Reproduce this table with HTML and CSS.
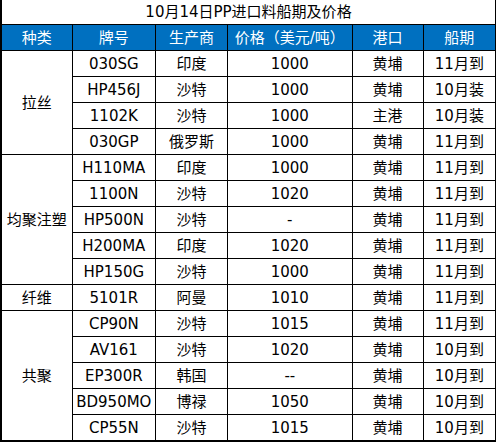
FILE: index.html
```html
<!DOCTYPE html>
<html lang="zh-CN">
<head>
    <meta charset="UTF-8">
    <title>10月14日PP进口料船期及价格</title>
    <link rel="stylesheet" href="styles.css">
</head>
<body>
    <table class="price-table">
        <colgroup>
            <col class="c-type">
            <col class="c-grade">
            <col class="c-maker">
            <col class="c-price">
            <col class="c-port">
            <col class="c-ship">
        </colgroup>
        <tr class="title-row">
            <td colspan="6">10月14日PP进口料船期及价格</td>
        </tr>
        <tr class="head-row">
            <th>种类</th>
            <th>牌号</th>
            <th>生产商</th>
            <th>价格（美元/吨）</th>
            <th>港口</th>
            <th>船期</th>
        </tr>
        <tr>
            <td rowspan="4">拉丝</td>
            <td>030SG</td><td>印度</td><td>1000</td><td>黄埔</td><td>11月到</td>
        </tr>
        <tr><td>HP456J</td><td>沙特</td><td>1000</td><td>黄埔</td><td>10月装</td></tr>
        <tr><td>1102K</td><td>沙特</td><td>1000</td><td>主港</td><td>10月装</td></tr>
        <tr><td>030GP</td><td>俄罗斯</td><td>1000</td><td>黄埔</td><td>11月到</td></tr>
        <tr>
            <td rowspan="5">均聚注塑</td>
            <td>H110MA</td><td>印度</td><td>1000</td><td>黄埔</td><td>11月到</td>
        </tr>
        <tr><td>1100N</td><td>沙特</td><td>1020</td><td>黄埔</td><td>11月到</td></tr>
        <tr><td>HP500N</td><td>沙特</td><td>-</td><td>黄埔</td><td>11月到</td></tr>
        <tr><td>H200MA</td><td>印度</td><td>1020</td><td>黄埔</td><td>11月到</td></tr>
        <tr><td>HP150G</td><td>沙特</td><td>1000</td><td>黄埔</td><td>11月到</td></tr>
        <tr>
            <td>纤维</td>
            <td>5101R</td><td>阿曼</td><td>1010</td><td>黄埔</td><td>11月到</td>
        </tr>
        <tr>
            <td rowspan="5">共聚</td>
            <td>CP90N</td><td>沙特</td><td>1015</td><td>黄埔</td><td>11月到</td>
        </tr>
        <tr><td>AV161</td><td>沙特</td><td>1020</td><td>黄埔</td><td>10月到</td></tr>
        <tr><td>EP300R</td><td>韩国</td><td>--</td><td>黄埔</td><td>10月到</td></tr>
        <tr><td>BD950MO</td><td>博禄</td><td>1050</td><td>黄埔</td><td>10月到</td></tr>
        <tr><td>CP55N</td><td>沙特</td><td>1015</td><td>黄埔</td><td>10月到</td></tr>
    </table>
</body>
</html>
```

FILE: styles.css
```css
body {
    margin: 0;
    background: #fff;
    font-family: "DejaVu Sans", "Noto Sans CJK SC", sans-serif;
    font-size: 15px;
    color: #000;
}

.price-table {
    width: 496px;
    table-layout: fixed;
    border-collapse: collapse;
    border-left: 2px solid #000;
    border-right: 1px solid #000;
    border-bottom: 2px solid #000;
}

.c-type { width: 71px; }
.c-grade { width: 83px; }
.c-maker { width: 72px; }
.c-price { width: 124px; }
.c-port { width: 71px; }
.c-ship { width: 72px; }

.price-table td,
.price-table th {
    height: 25px;
    padding: 0;
    border: 1px solid #000;
    text-align: center;
    vertical-align: middle;
    font-weight: normal;
    white-space: nowrap;
    line-height: 18px;
}

.title-row td {
    border-top: none;
    border-bottom: none;
    height: 24px;
}

.head-row th {
    background: #0070c0;
    color: #fff;
    height: 25px;
}
```
